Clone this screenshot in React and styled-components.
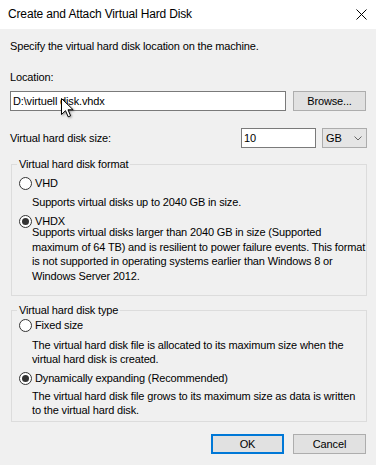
import React from "react";
import styled, { createGlobalStyle } from "styled-components";

const GlobalStyle = createGlobalStyle`
  html, body {
    margin: 0;
    padding: 0;
    background: #f0f0f0;
  }
  body {
    font-family: "Liberation Sans", Arial, sans-serif;
  }
`;

const Window = styled.div`
  width: 376px;
  height: 465px;
  overflow: hidden;
  background: #f0f0f0;
  color: #000;
  font-size: 11px;
  line-height: 14px;
  letter-spacing: -0.15px;
`;

const TitleBar = styled.div`
  height: 29px;
  background: #fff;
  display: flex;
  align-items: center;
  justify-content: space-between;
  padding: 0 9px 1px 8px;
  box-sizing: border-box;
  font-size: 12px;
`;

const Body = styled.div`
  padding: 10px 9px 0 10px;
`;

const Text = styled.div`
  margin-top: ${(p) => p.top || 0}px;
  padding-left: ${(p) => p.indent || 0}px;
  line-height: ${(p) => p.lh || 14}px;
  white-space: nowrap;
`;

const Row = styled.div`
  display: flex;
  align-items: center;
  gap: ${(p) => p.gap || 0}px;
  margin-top: ${(p) => p.top || 0}px;
  height: 20px;
`;

const Field = styled.div`
  position: relative;
  width: ${(p) => p.w}px;
  height: 20px;
  margin-right: ${(p) => p.mr || 0}px;
`;

const TextBox = styled.input`
  box-sizing: border-box;
  width: 100%;
  height: 100%;
  margin: 0;
  padding: 0 2px;
  border: 1px solid #7a7a7a;
  background: #fff;
  font: inherit;
  letter-spacing: inherit;
  color: #000;
  outline: none;
`;

const Button = styled.div`
  box-sizing: border-box;
  width: 73px;
  height: 20px;
  display: flex;
  align-items: center;
  justify-content: center;
  background: #e1e1e1;
  border: ${(p) => (p.primary ? "2px solid #0078d7" : "1px solid #adadad")};
`;

const Select = styled.div`
  box-sizing: border-box;
  width: 45px;
  height: 20px;
  display: flex;
  align-items: center;
  justify-content: space-between;
  padding: 0 4px 0 3px;
  background: #e5e5e5;
  border: 1px solid #acacac;
`;

const Spacer = styled.div`
  flex: 1;
`;

const Group = styled.fieldset`
  margin: ${(p) => p.top}px 0 0 1px;
  padding: ${(p) => p.pad};
  border: 1px solid #dcdcdc;
  min-width: 0;
`;

const Legend = styled.legend`
  padding: 0 2px;
  margin-left: -2px;
  line-height: 14px;
`;

const RadioRow = styled.div`
  display: flex;
  align-items: center;
  gap: 3px;
  height: 14px;
  margin-top: ${(p) => p.top || 0}px;
`;

const RadioCircle = styled.span`
  box-sizing: border-box;
  width: 13px;
  height: 13px;
  border-radius: 50%;
  border: 1px solid #333;
  background: #fff;
  display: flex;
  align-items: center;
  justify-content: center;

  &::after {
    content: "";
    width: 7px;
    height: 7px;
    border-radius: 50%;
    background: #333;
    display: ${(p) => (p.checked ? "block" : "none")};
  }
`;

const Pointer = styled.svg`
  position: absolute;
  left: 51px;
  top: 7px;
  filter: drop-shadow(1px 1px 1px rgba(0, 0, 0, 0.35));
`;

const Buttons = styled.div`
  display: flex;
  justify-content: flex-end;
  gap: 9px;
  margin-top: 12px;
  padding-right: 1px;
`;

function Radio({ label, checked, top }) {
  return (
    <RadioRow top={top}>
      <RadioCircle checked={checked} />
      <span>{label}</span>
    </RadioRow>
  );
}

export default function App() {
  return (
    <>
      <GlobalStyle />
      <Window>
        <TitleBar>
          <span>Create and Attach Virtual Hard Disk</span>
          <svg width="11" height="11" viewBox="0 0 11 11">
            <path d="M0.5 0.5L10.5 10.5M10.5 0.5L0.5 10.5" stroke="#000" strokeWidth="1" />
          </svg>
        </TitleBar>
        <Body>
          <Text>Specify the virtual hard disk location on the machine.</Text>
          <Text top={17}>Location:</Text>
          <Row top={7} gap={7}>
            <Field w={276}>
              <TextBox defaultValue="D:\virtuell disk.vhdx" readOnly />
              <Pointer width="13" height="20" viewBox="0 0 13 20">
                <path
                  d="M0.5 0.5V16.5L4.5 12.7L7.2 18.8L9.6 17.8L7 11.8H12.2Z"
                  fill="#fff"
                  stroke="#000"
                  strokeWidth="1"
                />
              </Pointer>
            </Field>
            <Button>Browse...</Button>
          </Row>
          <Row top={17}>
            <span>Virtual hard disk size:</span>
            <Spacer />
            <Field w={75} mr={6}>
              <TextBox defaultValue="10" readOnly />
            </Field>
            <Select>
              <span>GB</span>
              <svg width="8" height="5" viewBox="0 0 8 5">
                <path d="M0.5 0.5L4 4L7.5 0.5" stroke="#666" fill="none" strokeWidth="1" />
              </svg>
            </Select>
          </Row>

          <Group top={9} pad="5px 8px 12px 7px">
            <Legend>Virtual hard disk format</Legend>
            <Radio label="VHD" />
            <Text top={5} indent={13}>
              Supports virtual disks up to 2040 GB in size.
            </Text>
            <Radio label="VHDX" checked top={5} />
            <Text top={-3} indent={13} lh={14.5}>
              Supports virtual disks larger than 2040 GB in size (Supported
              <br />
              maximum of 64 TB) and is resilient to power failure events. This format
              <br />
              is not supported in operating systems earlier than Windows 8 or
              <br />
              Windows Server 2012.
            </Text>
          </Group>

          <Group top={7} pad="1px 8px 4px 7px">
            <Legend>Virtual hard disk type</Legend>
            <Radio label="Fixed size" />
            <Text top={6} indent={13}>
              The virtual hard disk file is allocated to its maximum size when the
              <br />
              virtual hard disk is created.
            </Text>
            <Radio label="Dynamically expanding (Recommended)" checked top={5} />
            <Text top={5} indent={13} lh={13.5}>
              The virtual hard disk file grows to its maximum size as data is written
              <br />
              to the virtual hard disk.
            </Text>
          </Group>

          <Buttons>
            <Button primary>OK</Button>
            <Button>Cancel</Button>
          </Buttons>
        </Body>
      </Window>
    </>
  );
}
